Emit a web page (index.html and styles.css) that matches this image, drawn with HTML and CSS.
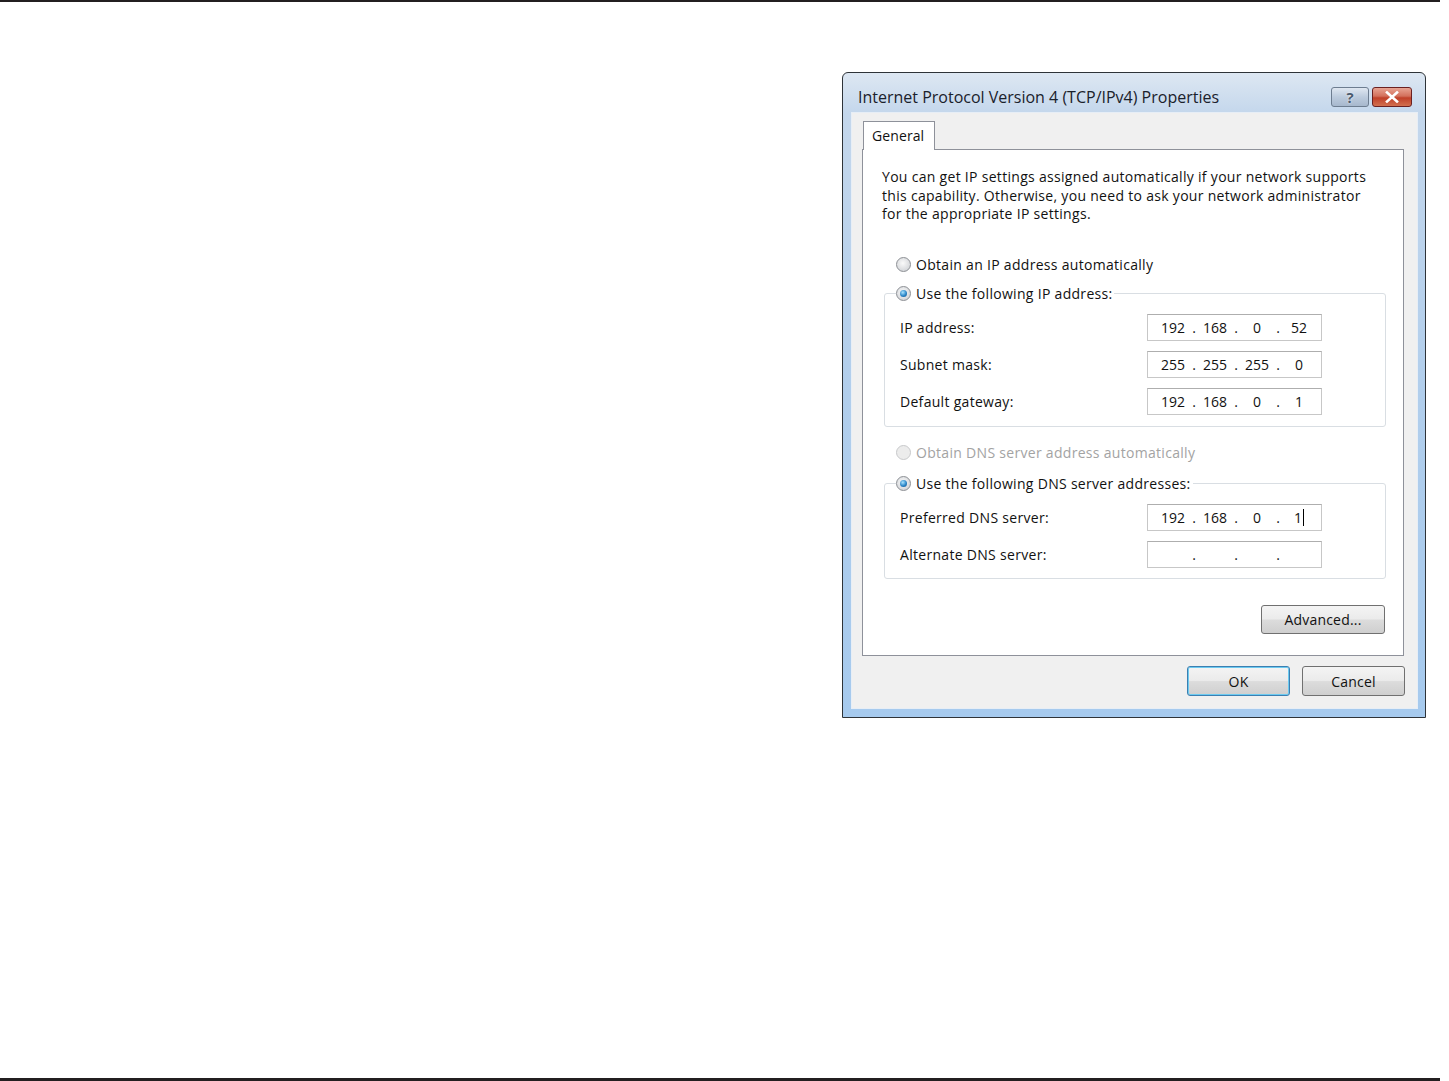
FILE: index.html
```html
<!DOCTYPE html>
<html lang="en">
<head>
    <meta charset="UTF-8">
    <title>Internet Protocol Version 4 (TCP/IPv4) Properties</title>
    <link rel="stylesheet" href="styles.css">
</head>
<body>
    <div class="page">
        <div class="dialog">
            <div class="titlebar">
                <span class="title">Internet Protocol Version 4 (TCP/IPv4) Properties</span>
                <div class="caption-btns">
                    <span class="cap-btn help">?</span>
                    <span class="cap-btn close">
                        <svg width="14" height="12" viewBox="0 0 14 12"><path d="M2 1.5 L12 10.5 M12 1.5 L2 10.5" stroke="#fff" stroke-width="2.6" stroke-linecap="square"/></svg>
                    </span>
                </div>
            </div>
            <div class="client">
                <div class="tabs"><span class="tab">General</span></div>
                <div class="panel">
                    <p class="intro">You can get IP settings assigned automatically if your network supports<br>this capability. Otherwise, you need to ask your network administrator<br>for the appropriate IP settings.</p>

                    <div class="radio-row"><span class="radio"></span>Obtain an IP address automatically</div>
                    <fieldset class="group group-ip">
                        <legend><span class="radio checked"></span>Use the following IP address:</legend>
                        <div class="field-row">
                            <span class="label">IP address:</span>
                            <div class="ip"><span>192</span><i>.</i><span>168</span><i>.</i><span>0</span><i>.</i><span>52</span></div>
                        </div>
                        <div class="field-row">
                            <span class="label">Subnet mask:</span>
                            <div class="ip"><span>255</span><i>.</i><span>255</span><i>.</i><span>255</span><i>.</i><span>0</span></div>
                        </div>
                        <div class="field-row">
                            <span class="label">Default gateway:</span>
                            <div class="ip"><span>192</span><i>.</i><span>168</span><i>.</i><span>0</span><i>.</i><span>1</span></div>
                        </div>
                    </fieldset>

                    <div class="radio-row disabled dns-auto"><span class="radio"></span>Obtain DNS server address automatically</div>
                    <fieldset class="group group-dns">
                        <legend><span class="radio checked"></span>Use the following DNS server addresses:</legend>
                        <div class="field-row">
                            <span class="label">Preferred DNS server:</span>
                            <div class="ip"><span>192</span><i>.</i><span>168</span><i>.</i><span>0</span><i>.</i><span>1<b class="caret"></b></span></div>
                        </div>
                        <div class="field-row">
                            <span class="label">Alternate DNS server:</span>
                            <div class="ip"><span></span><i>.</i><span></span><i>.</i><span></span><i>.</i><span></span></div>
                        </div>
                    </fieldset>

                    <div class="advanced-row"><button class="btn advanced">Advanced...</button></div>
                </div>
                <div class="footer">
                    <button class="btn default">OK</button>
                    <button class="btn">Cancel</button>
                </div>
            </div>
        </div>
    </div>
</body>
</html>
```

FILE: styles.css
```css
body {
    margin: 0;
    background: #fff;
    font-family: "Open Sans", "Noto Sans", sans-serif;
    font-size: 14px;
    color: #111;
}
.page {
    box-sizing: border-box;
    width: 1440px;
    height: 1081px;
    border-top: 2px solid #231f20;
    border-bottom: 3px solid #231f20;
    padding: 70px 0 0 842px;
}
.dialog {
    box-sizing: border-box;
    width: 584px;
    height: 646px;
    border: 1px solid #2e3338;
    border-radius: 6px 6px 0 0;
    background: linear-gradient(#dde7f2, #c4d7ec 40px, #b1ceec 50%, #a6caee);
    display: flex;
    flex-direction: column;
}
.titlebar {
    height: 40px;
    display: flex;
    align-items: flex-start;
    justify-content: space-between;
    padding: 0 13px 0 15px;
}
.title {
    margin-top: 13px;
    font-size: 16px;
    letter-spacing: 0;
    color: #1a212b;
}
.caption-btns {
    display: flex;
    gap: 3px;
    margin-top: 14px;
}
.cap-btn {
    box-sizing: border-box;
    height: 20px;
    display: flex;
    align-items: center;
    justify-content: center;
    border: 1px solid #6d7d90;
    border-radius: 3px;
}
.help {
    width: 38px;
    background: linear-gradient(#dfe7f1, #bccbdd 50%, #a7b8cd);
    font-weight: bold;
    font-size: 15px;
    color: #4a5a6e;
    text-shadow: 0 0 2px #fff;
}
.close {
    width: 40px;
    border-color: #6b2020;
    background: linear-gradient(#e8a493, #d3705c 45%, #c04029 55%, #d2704f);
}
.client {
    flex: 1;
    margin: 0 8px 9px 9px;
    background: #f0f0f0;
    box-shadow: 0 0 0 1px #e7eef6;
    padding: 8px 13px 0 10px;
    display: flex;
    flex-direction: column;
}
.tabs {
    display: flex;
    padding-left: 1px;
    position: relative;
    z-index: 1;
    margin-bottom: -1px;
}
.tab {
    box-sizing: border-box;
    height: 29px;
    width: 72px;
    border: 1px solid #8e919a;
    border-bottom: none;
    background: #fff;
    padding: 4px 0 0 8px;
    letter-spacing: 0.1px;
}
.panel {
    box-sizing: border-box;
    height: 507px;
    border: 1px solid #8e919a;
    background: #fff;
    padding: 0 17px 0 21px;
    display: flex;
    flex-direction: column;
}
.intro {
    margin: 18px 0 0 -2px;
    line-height: 18.5px;
    letter-spacing: 0.3px;
    white-space: nowrap;
}
.radio-row, .group legend {
    height: 20px;
    display: flex;
    align-items: center;
    gap: 5px;
    letter-spacing: 0.3px;
}
.radio-row {
    margin: 31px 0 0 12px;
}
.radio {
    box-sizing: border-box;
    width: 15px;
    height: 15px;
    border-radius: 50%;
    border: 1px solid #8c8f94;
    background: radial-gradient(circle at 45% 40%, #fafafa, #d7d9dc 70%, #c3c6ca);
    display: flex;
    align-items: center;
    justify-content: center;
}
.radio.checked::after {
    content: "";
    width: 7px;
    height: 7px;
    border-radius: 50%;
    background: radial-gradient(circle at 40% 35%, #a9e3ff, #2a86c8 55%, #174f86);
}
.disabled {
    color: #a3a3a3;
}
.disabled .radio {
    border-color: #c8c9cb;
    background: #ececec;
}
.group {
    margin: 9px 0 0 0;
    padding: 0 0 11px 0;
    border: 1px solid #d9dee3;
    border-radius: 3px;
    min-width: 0;
}
.group legend {
    padding: 0 2px 0 0;
    margin-left: 11px;
}
.field-row {
    display: flex;
    align-items: center;
    justify-content: space-between;
    margin-top: 10px;
    padding: 0 63px 0 15px;
    letter-spacing: 0.3px;
}
.ip {
    box-sizing: border-box;
    width: 175px;
    height: 27px;
    border: 1px solid #c7c7c7;
    border-top-color: #aeaeae;
    padding-left: 6px;
    display: grid;
    grid-template-columns: 38px 4px 38px 4px 38px 4px 38px;
    align-items: center;
    letter-spacing: 0;
}
.ip span {
    text-align: center;
}
.ip i {
    font-style: normal;
    text-align: center;
}
.caret {
    display: inline-block;
    width: 1px;
    height: 17px;
    background: #000;
    vertical-align: -3px;
    margin-left: 1px;
}
.dns-auto {
    margin-top: 16px;
}
.group-dns {
    margin-top: 11px;
    padding-bottom: 10px;
}
.advanced-row {
    display: flex;
    justify-content: flex-end;
    margin-top: 26px;
    padding-right: 1px;
}
.btn {
    box-sizing: border-box;
    height: 30px;
    border: 1px solid #707070;
    border-radius: 3px;
    background: linear-gradient(#f4f4f4, #ebebeb 48%, #dcdcdc 52%, #cfcfcf);
    font-family: inherit;
    font-size: 14px;
    color: #111;
    letter-spacing: 0.2px;
    padding: 0;
}
.advanced {
    width: 124px;
    height: 29px;
}
.footer {
    display: flex;
    justify-content: flex-end;
    gap: 12px;
    margin: 10px -1px 0 0;
}
.footer .btn {
    width: 103px;
}
.btn.default {
    border-color: #3c7fb1;
    box-shadow: inset 0 0 0 1px #6ccaf0;
}
```
